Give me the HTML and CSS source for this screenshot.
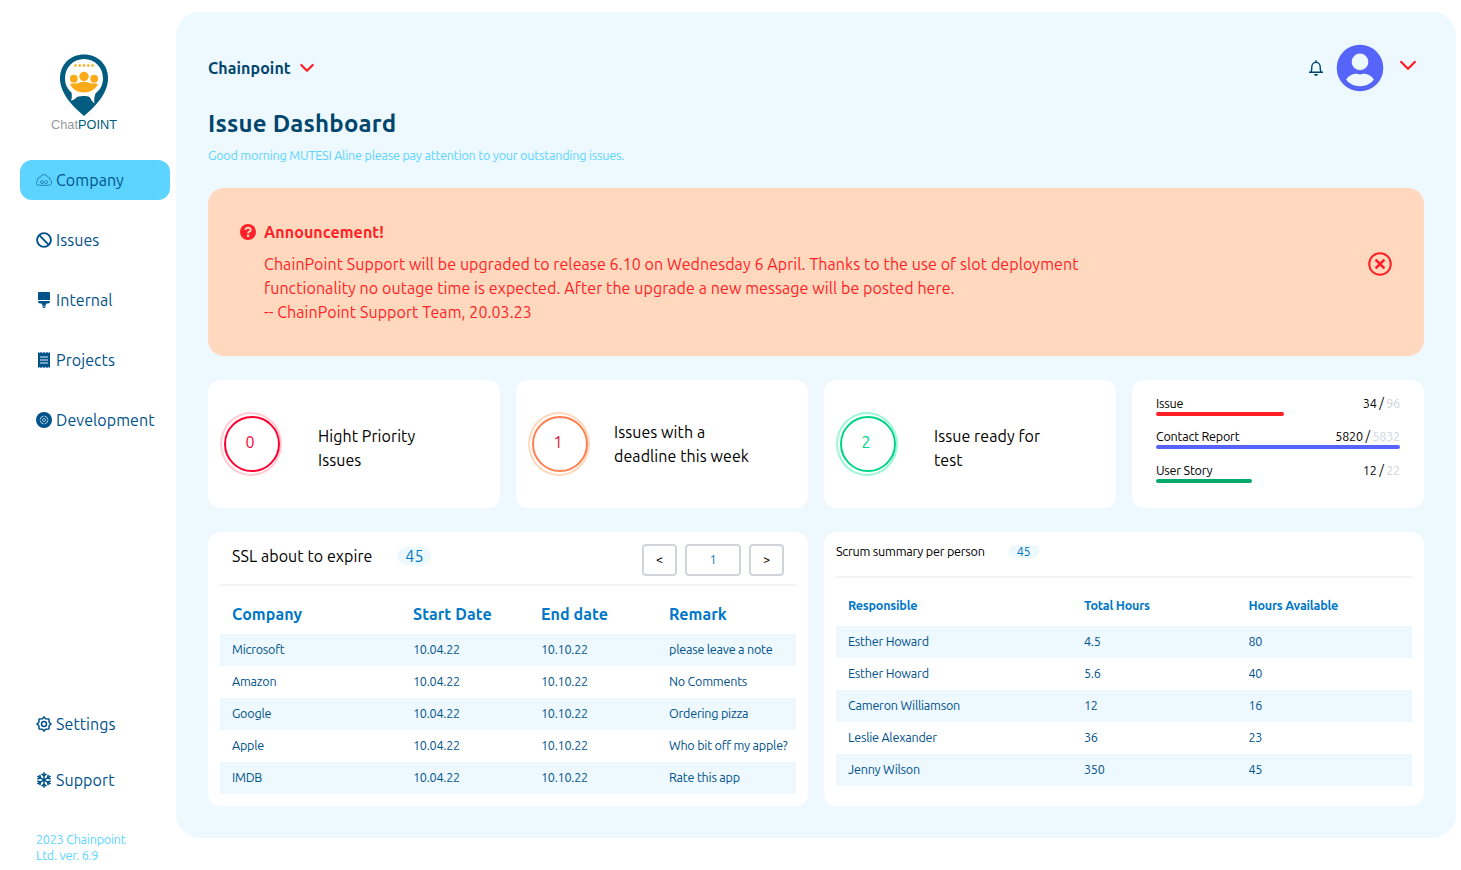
FILE: index.html
```html
<!DOCTYPE html>
<html lang="en">
<head>
<meta charset="utf-8">
<title>Issue Dashboard</title>
<link rel="stylesheet" href="styles.css">
</head>
<body>
<aside class="sidebar">
  <div class="logo">
    <svg width="50" height="62" viewBox="0 0 50 62">
      <path d="M25 0.500C11 .5 1 10.500 1 24.500C1 39 13 52 25 62C37 52 49 39 49 24.500C49 10.500 39 .5 25 .5Z" fill="#015c80"/>
      <path d="M25 5C14 5 6 13.500 6 24.500C6 31 9 35.500 12.500 38.500C13 41.500 13 44 12 46.800C15 46 17 44 18.500 42.800C22.500 41.800 27.500 41.800 30.500 43C32 45.500 33.500 48 35.500 49.500C34.800 46 35.500 42 36.500 39.500C41 36 44 31 44 24.500C44 13.500 36 5 25 5Z" fill="#fff"/>
      <g fill="#faab17"><circle cx="16.500" cy="11.500" r="1.300"/><circle cx="20.750" cy="11.500" r="1.300"/><circle cx="25" cy="11.500" r="1.300"/><circle cx="29.250" cy="11.500" r="1.300"/><circle cx="33.500" cy="11.500" r="1.300"/>
      <circle cx="14.800" cy="24.700" r="3.900"/><circle cx="35.200" cy="24.700" r="3.900"/><circle cx="25" cy="22.500" r="4.700"/>
      <path d="M11 30Q14 28.800 18 29.500Q21 27.700 25 27.700Q29 27.700 32 29.500Q36 28.800 39 30C37 35 31 38.500 25 38.500C19 38.500 13 35 11 30Z"/></g>
    </svg>
    <div class="wordmark"><span>Chat</span>POINT</div>
  </div>
  <nav class="nav">
    <a class="nav-item active">
      <svg width="16" height="16" viewBox="0 0 16 16" fill="none" stroke="currentColor" stroke-width=".6"><path d="M3 13.300A2.600 2.600 0 0 1 1.800 8.300A2.200 2.200 0 0 1 4.400 5.300A4 4 0 0 1 11.900 5.100A2.200 2.200 0 0 1 13.900 7.700A2.900 2.900 0 0 1 13 13.300Z"/><path d="M7.600 11L6.900 9A1.500 1.500 0 1 0 6.900 11.300L9.300 9A1.500 1.500 0 1 1 9.200 11.300L8.600 10.700"/></svg>
      <span>Company</span></a>
    <a class="nav-item">
      <svg width="16" height="16" viewBox="0 0 16 16" fill="none" stroke="currentColor" stroke-width="1.900"><circle cx="8" cy="8" r="6.900"/><path d="M3.200 3.200L12.800 12.800"/></svg>
      <span>Issues</span></a>
    <a class="nav-item">
      <svg width="16" height="16" viewBox="0 0 16 16" fill="currentColor"><path d="M2 1Q2 0 3 0H13Q14 0 14 1V8H2ZM2 9H14Q14 11.500 12 11.500H10.500L9.500 13V14.500A1.500 1.500 0 0 1 6.500 14.500V13L5.500 11.500H4Q2 11.500 2 9Z"/><circle cx="8" cy="14.200" r=".6" fill="#fff"/></svg>
      <span>Internal</span></a>
    <a class="nav-item">
      <svg width="16" height="16" viewBox="0 0 16 16"><path fill="currentColor" d="M2 0L3.500 1L5 0L6.500 1L8 0L9.500 1L11 0L12.500 1L14 0V16L12.500 15L11 16L9.500 15L8 16L6.500 15L5 16L3.500 15L2 16Z"/><path d="M4 5H12M4 8H12M4 11H12" stroke="#9bbdd2" stroke-width="1.600"/></svg>
      <span>Projects</span></a>
    <a class="nav-item">
      <svg width="16" height="16" viewBox="0 0 16 16"><circle cx="8" cy="8" r="8" fill="currentColor"/><circle cx="8" cy="8" r="3.900" fill="none" stroke="#c5dbe8" stroke-width=".9" stroke-dasharray="5.100 1.025"/><circle cx="8" cy="8" r="1.500" fill="none" stroke="#c5dbe8" stroke-width=".8"/></svg>
      <span>Development</span></a>
  </nav>
  <nav class="nav nav-bottom">
    <a class="nav-item">
      <svg width="16" height="16" viewBox="0 0 16 16" fill="none" stroke="currentColor" stroke-width="1.500" stroke-linejoin="round"><path d="M8 .9L9.600 2.800L12.900 3.100L13.200 6.400L15.100 8L13.200 9.600L12.900 12.900L9.600 13.200L8 15.100L6.400 13.200L3.100 12.900L2.800 9.600L.9 8L2.800 6.400L3.100 3.100L6.400 2.800Z"/><circle cx="8" cy="8" r="2.500"/></svg>
      <span>Settings</span></a>
    <a class="nav-item">
      <svg width="16" height="16" viewBox="0 0 16 16" fill="none" stroke="currentColor" stroke-width="1.500"><g id="arm"><path d="M8 .3V15.700M5.600 1.700L8 4L10.400 1.700M5.600 14.300L8 12L10.400 14.300"/></g><use href="#arm" transform="rotate(60 8 8)"/><use href="#arm" transform="rotate(120 8 8)"/></svg>
      <span>Support</span></a>
  </nav>
  <footer class="version fine">2023 Chainpoint<br>Ltd. ver. 6.9</footer>
</aside>

<main class="main">
  <header class="topbar">
    <div class="project"><span>Chainpoint</span>
      <svg width="16" height="16" viewBox="0 0 16 16" fill="none" stroke="#ff1f26" stroke-width="2.200" stroke-linecap="round" stroke-linejoin="round"><path d="M2.300 5L8 10.700L13.700 5"/></svg>
    </div>
    <div class="user">
      <svg width="16" height="16" viewBox="0 0 16 16" fill="none" stroke="#00466c" stroke-width="1.400"><path d="M3.300 12V11Q3.800 10 3.800 7A4.200 4.700 0 0 1 12.200 7Q12.200 10 12.700 11V12M1 12.300H15M8 2.500V.2"/><path d="M6 14H10Q9.600 15.900 8 15.900Q6.400 15.900 6 14Z" fill="#00466c" stroke="none"/></svg>
      <svg class="avatar" width="48" height="48" viewBox="0 0 48 48"><circle cx="24" cy="24" r="23.300" fill="#5664fa"/><circle cx="24" cy="17.900" r="8.300" fill="#edf8ff"/><path d="M10 35.500C13 31.500 17 29.800 20 29.800C22 29.800 22 30.500 24 30.500C26 30.500 26 29.800 28 29.800C31 29.800 35 31.500 38 35.500C34.500 40 30 42.200 24 42.200C18 42.200 13.500 40 10 35.500Z" fill="#edf8ff"/></svg>
      <svg class="caret" width="16" height="12" viewBox="0 0 16 12" fill="none" stroke="#ff1f26" stroke-width="2.300" stroke-linecap="round" stroke-linejoin="round"><path d="M1.200 2L8 8.800L14.800 2"/></svg>
    </div>
  </header>
  <h1 class="title">Issue Dashboard</h1>
  <p class="greeting fine">Good morning MUTESI Aline please pay attention to your outstanding issues.</p>

  <section class="notice">
    <svg class="help" width="16" height="16" viewBox="0 0 16 16"><circle cx="8" cy="8" r="8" fill="#ff1f26"/><path d="M5.300 6Q5.900 3.700 8.200 3.800Q10.700 4 10.700 5.900Q10.700 7 9.300 7.700Q8.200 8.200 8.200 9.400" fill="none" stroke="#ffd8be" stroke-width="1.900"/><circle cx="8.100" cy="11.900" r="1.300" fill="#ffd8be"/></svg>
    <div class="notice-body">
      <h2 class="notice-title">Announcement!</h2>
      <p class="notice-text">ChainPoint Support will be upgraded to release 6.10 on Wednesday 6 April. Thanks to the use of slot deployment<br>functionality no outage time is expected. After the upgrade a new message will be posted here.<br>-- ChainPoint Support Team, 20.03.23</p>
    </div>
    <svg class="close" width="24" height="24" viewBox="0 0 24 24" fill="none" stroke="#ff1f26"><circle cx="12" cy="12" r="10.800" stroke-width="2"/><path d="M7.600 7.600L16.400 16.400M16.400 7.600L7.600 16.400" stroke-width="2.700"/></svg>
  </section>

  <section class="stats">
    <article class="card stat"><div class="ring ring-red"><div class="ring-in">0</div></div><p class="stat-label low">Hight Priority<br>Issues</p></article>
    <article class="card stat"><div class="ring ring-orange"><div class="ring-in">1</div></div><p class="stat-label near">Issues with a<br>deadline this week</p></article>
    <article class="card stat"><div class="ring ring-green"><div class="ring-in">2</div></div><p class="stat-label low">Issue ready for<br>test</p></article>
    <article class="card progress fine">
      <div class="meter"><div class="meter-row"><span>Issue</span><span>34 / <i>96</i></span></div><div class="bar red" style="width:128px"></div></div>
      <div class="meter"><div class="meter-row"><span>Contact Report</span><span>5820 / <i>5832</i></span></div><div class="bar blue" style="width:244px"></div></div>
      <div class="meter"><div class="meter-row"><span>User Story</span><span>12 / <i>22</i></span></div><div class="bar green" style="width:96px"></div></div>
    </article>
  </section>

  <section class="panels">
    <article class="card panel">
      <div class="panel-head ssl-head">
        <h3 class="panel-title">SSL about to expire</h3><span class="badge">45</span>
        <div class="pager"><button>&lt;</button><button class="page">1</button><button>&gt;</button></div>
      </div>
      <div class="table ssl">
        <div class="tr th"><span>Company</span><span>Start Date</span><span>End date</span><span>Remark</span></div>
        <div class="tr fine"><span>Microsoft</span><span>10.04.22</span><span>10.10.22</span><span>please leave a note</span></div>
        <div class="tr fine"><span>Amazon</span><span>10.04.22</span><span>10.10.22</span><span>No Comments</span></div>
        <div class="tr fine"><span>Google</span><span>10.04.22</span><span>10.10.22</span><span>Ordering pizza</span></div>
        <div class="tr fine"><span>Apple</span><span>10.04.22</span><span>10.10.22</span><span>Who bit off my apple?</span></div>
        <div class="tr fine"><span>IMDB</span><span>10.04.22</span><span>10.10.22</span><span>Rate this app</span></div>
      </div>
    </article>
    <article class="card panel">
      <div class="panel-head scrum-head fine"><h3 class="panel-title small">Scrum summary per person</h3><span class="badge small">45</span></div>
      <div class="table scrum">
        <div class="tr th fine"><span>Responsible</span><span>Total Hours</span><span>Hours Available</span></div>
        <div class="tr fine"><span>Esther Howard</span><span>4.5</span><span>80</span></div>
        <div class="tr fine"><span>Esther Howard</span><span>5.6</span><span>40</span></div>
        <div class="tr fine"><span>Cameron Williamson</span><span>12</span><span>16</span></div>
        <div class="tr fine"><span>Leslie Alexander</span><span>36</span><span>23</span></div>
        <div class="tr fine"><span>Jenny Wilson</span><span>350</span><span>45</span></div>
      </div>
    </article>
  </section>
</main>
</body>
</html>
```
FILE: styles.css
```css
* { box-sizing: border-box; margin: 0; padding: 0; }
body { display: flex; height: 870px; overflow: hidden; background: #fff; color: #000; font: 16px/24px Ubuntu, "Noto Sans", sans-serif; letter-spacing: .08px; }
svg { display: block; flex: none; }
span, p, h1, h2, h3 { white-space: nowrap; }
.fine { font-size: 12.600px; line-height: 16px; letter-spacing: -.23px; }

.sidebar { width: 176px; flex: none; display: flex; flex-direction: column; padding: 54px 6px 6px 20px; color: #00528a; }
.logo { width: 128px; height: 78px; display: flex; flex-direction: column; align-items: center; }
.wordmark { font: 12.750px/17px "Liberation Sans", sans-serif; letter-spacing: 0; color: #015c80; }
.wordmark span { color: #999; }
.nav { display: flex; flex-direction: column; gap: 20px; margin-top: 28px; }
.nav-item { display: flex; align-items: center; gap: 4px; height: 40px; padding-left: 16px; border-radius: 12px; }
.nav-item.active { background: #5cd4ff; }
.nav-bottom { margin-top: auto; gap: 16px; }
.version { margin: 31px 0 1px 16px; color: #5cd4ff; }

.main { width: 1280px; height: 826px; flex: none; margin-top: 12px; padding: 32px; border-radius: 24px; background: #edf8ff; }
.topbar { display: flex; justify-content: space-between; height: 48px; align-items: center; }
.project { display: flex; align-items: center; gap: 8px; font-weight: 700; color: #00466c; }
.user { display: flex; align-items: center; }
.avatar { margin-left: 12px; }
.caret { margin: 0 8px 5px 16px; }
.title { margin-top: 16px; font-size: 24px; line-height: 32px; font-weight: 700; letter-spacing: .2px; color: #00466c; }
.greeting { margin-top: 7px; letter-spacing: -.205px; color: #5cd4ff; }

.notice { display: flex; height: 168px; margin-top: 25px; padding: 32px; border-radius: 16px; background: #ffd8be; color: #ff1f26; }
.help { margin-top: 4px; }
.notice-body { flex: 1; margin-left: 8px; }
.notice-title { font-size: 16px; line-height: 24px; font-weight: 700; }
.notice-text { margin-top: 8px; }
.close { margin-top: 32px; }

.card { background: #fff; border-radius: 12px; }
.stats { display: grid; grid-template-columns: repeat(4, 1fr); gap: 16px; margin-top: 24px; }
.stat { display: flex; align-items: center; height: 128px; padding: 0 12px; }
.ring { width: 62px; height: 64px; flex: none; padding: 2px; border: 2px solid; border-radius: 50%; }
.ring-in { width: 56px; height: 56px; padding: 0 4px 4px 0; display: flex; align-items: center; justify-content: center; border: 2px solid; border-radius: 50%; }
.ring-red { border-color: #ffccd4; color: #ff0030; }
.ring-orange { border-color: #ffd8be; color: #e0152c; }
.ring-orange .ring-in { border-color: #ff7f50; }
.ring-green { border-color: #9df7d6; color: #00d487; }
.stat-label { margin-left: 36px; }
.stat-label.near { margin-left: 24px; }
.stat-label.low { padding-top: 8px; }
.progress { display: flex; flex-direction: column; gap: 13.330px; padding: 16px 24px; }
.meter-row { display: flex; justify-content: space-between; padding-bottom: 2px; line-height: 14px; }
.meter-row i { font-style: normal; color: #d1d5db; }
.bar { height: 4px; border-radius: 2px; }
.red { background: #ff1f26; }
.blue { background: #5664fa; }
.green { background: #05a96c; }

.panels { display: grid; grid-template-columns: 1fr 1fr; gap: 16px; margin-top: 24px; }
.panel { height: 274px; padding: 12px; }
.panel-head { display: flex; align-items: flex-start; border-bottom: 2px solid #f3f3f4; }
.ssl-head { height: 42px; padding: 0 12px; }
.scrum-head { height: 34px; }
.panel-title { font-size: 16px; line-height: 24px; font-weight: 400; }
.panel-title.small { font-size: inherit; line-height: 14px; }
.badge { width: 34px; margin: 3px 0 0 25px; line-height: 18px; border-radius: 9px; background: #edf8ff; color: #0077c8; text-align: center; }
.badge.small { width: 30px; margin: 1px 0 0 24px; line-height: 13px; }
.pager { display: flex; gap: 8px; margin-left: auto; }
.pager button { width: 35px; height: 32px; padding-bottom: 2px; border: 2px solid #d1d5db; border-radius: 4px; background: #fff; color: #000; font: 12.600px/16px Ubuntu, "Noto Sans", sans-serif; }
.pager .page { width: 56px; color: #0077c8; }
.tr { display: grid; height: 32px; align-items: center; padding: 0 0 2px 12px; color: #00528a; }
.tr:nth-child(even) { background: #edf8ff; }
.ssl .tr { grid-template-columns: 181px 128px 128px 1fr; }
.scrum .tr { grid-template-columns: 236px 164.500px 1fr; }
.table .th { height: 48px; font-weight: 700; color: #0077c8; }
.ssl .th { padding-top: 10px; }
.scrum .th { padding-top: 7px; }
```
